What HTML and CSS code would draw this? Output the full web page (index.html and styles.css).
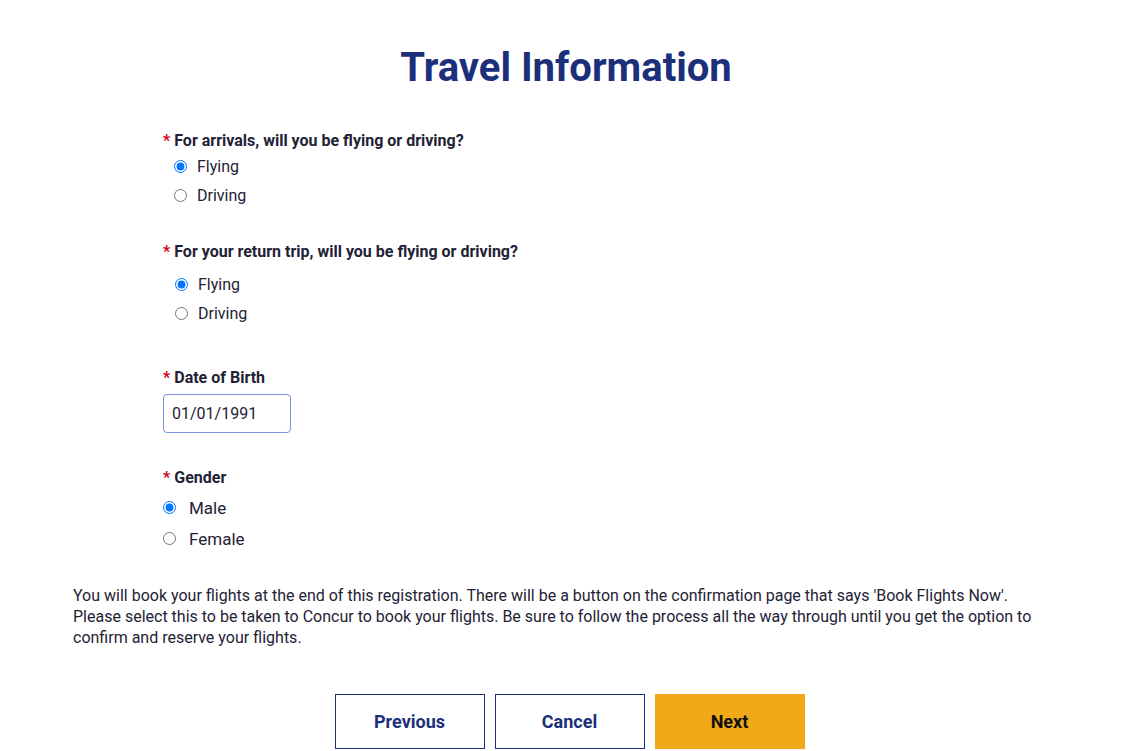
FILE: index.html
```html
<!DOCTYPE html>
<html lang="en">
<head>
<meta charset="utf-8">
<title>Travel Information</title>
<link rel="stylesheet" href="styles.css">
</head>
<body>
<main class="page">
  <h1 class="title">Travel Information</h1>
  <section class="form">
    <div class="field q1">
      <div class="label"><span class="req">*</span> For arrivals, will you be flying or driving?</div>
      <div class="options indent">
        <label class="opt"><input type="radio" name="arr" checked><span>Flying</span></label>
        <label class="opt"><input type="radio" name="arr"><span>Driving</span></label>
      </div>
    </div>
    <div class="field q2">
      <div class="label"><span class="req">*</span> For your return trip, will you be flying or driving?</div>
      <div class="options indent2">
        <label class="opt"><input type="radio" name="ret" checked><span>Flying</span></label>
        <label class="opt"><input type="radio" name="ret"><span>Driving</span></label>
      </div>
    </div>
    <div class="field q3">
      <div class="label"><span class="req">*</span> Date of Birth</div>
      <input class="date" type="text" value="01/01/1991">
    </div>
    <div class="field q4">
      <div class="label"><span class="req">*</span> Gender</div>
      <div class="options gender">
        <label class="opt"><input type="radio" name="g" checked><span>Male</span></label>
        <label class="opt"><input type="radio" name="g"><span>Female</span></label>
      </div>
    </div>
  </section>
  <p class="note">You will book your flights at the end of this registration. There will be a button on the confirmation page that says 'Book Flights Now'. Please select this to be taken to Concur to book your flights. Be sure to follow the process all the way through until you get the option to confirm and reserve your flights.</p>
  <div class="actions">
    <button class="btn outline">Previous</button>
    <button class="btn outline">Cancel</button>
    <button class="btn primary">Next</button>
  </div>
</main>
</body>
</html>
```

FILE: styles.css
```css
html, body {
  margin: 0;
  padding: 0;
  background: #fff;
}
body {
  font-family: Roboto, "Noto Sans", sans-serif;
  color: #1f2235;
}
.page {
  padding: 0 73px;
  display: flex;
  flex-direction: column;
}
.title {
  margin: 44px 0 0;
  height: 48px;
  line-height: 48px;
  font-size: 40px;
  font-weight: 700;
  color: #1c2f7b;
  text-align: center;
}
.form {
  padding-left: 90px;
  display: flex;
  flex-direction: column;
}
.label {
  font-size: 16px;
  font-weight: 700;
  line-height: 20px;
  height: 20px;
  color: #1f2235;
}
.req {
  color: #d0021b;
}
.q1 { margin-top: 39px; }
.q2 { margin-top: 32px; }
.q3 { margin-top: 40px; }
.q4 { margin-top: 35px; }
.options {
  display: flex;
  flex-direction: column;
}
.indent { padding-left: 11px; margin-top: 1px; }
.indent2 { padding-left: 12px; margin-top: 8px; }
.gender { margin-top: 4px; }
.opt {
  display: flex;
  align-items: center;
  height: 29px;
  font-size: 16px;
  color: #1f2235;
}
.opt input {
  margin: 0 10px 0 0;
  width: 13px;
  height: 13px;
}
.gender .opt {
  height: 31px;
  font-size: 17px;
}
.gender .opt input {
  width: 13px;
  height: 13px;
  margin-right: 13px;
}
.date {
  margin-top: 6px;
  width: 128px;
  height: 39px;
  box-sizing: border-box;
  border: 1px solid #7b93e3;
  border-radius: 4px;
  padding: 0 8px;
  font-family: Roboto, sans-serif;
  font-size: 16px;
  color: #1f2235;
}
.note {
  margin: 31px 0 0;
  font-size: 16px;
  line-height: 21px;
  color: #1f2235;
}
.actions {
  margin-top: 46px;
  display: flex;
  justify-content: center;
  gap: 10px;
  padding-left: 7px;
}
.btn {
  width: 150px;
  height: 55px;
  box-sizing: border-box;
  font-family: Roboto, sans-serif;
  font-size: 18px;
  font-weight: 700;
  cursor: pointer;
}
.outline {
  background: #fff;
  border: 1.5px solid #1c2f7b;
  color: #1c2f7b;
}
.primary {
  background: #f0aa19;
  border: none;
  color: #111;
}
```
